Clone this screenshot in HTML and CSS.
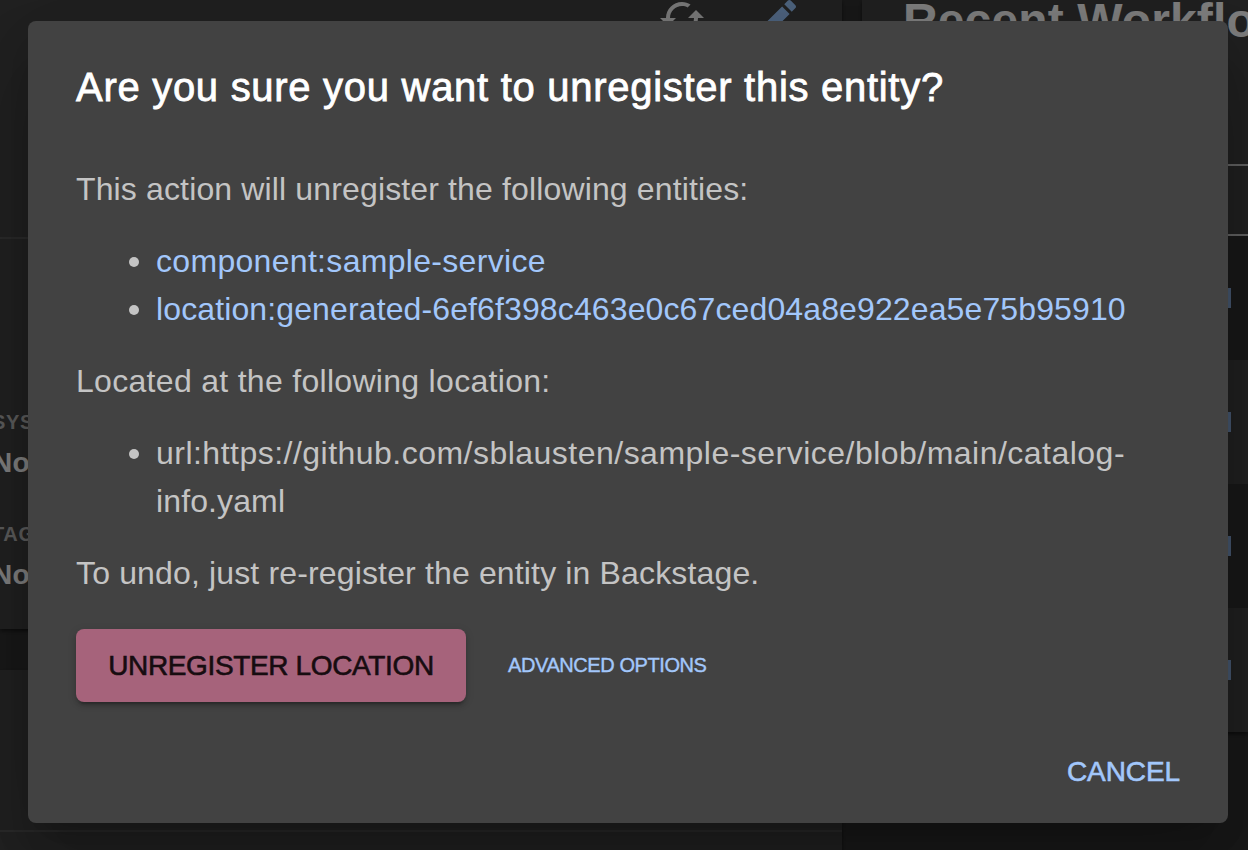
FILE: index.html
```html
<!DOCTYPE html>
<html lang="en">
<head>
<meta charset="utf-8">
<title>Unregister entity</title>
<link rel="stylesheet" href="styles.css">
</head>
<body>
<div class="page">
  <main class="columns">
    <section class="left">
      <div class="card about">
        <div class="toolbar">
          <svg class="icon" viewBox="0 0 24 24"><path d="M19 8l-4 4h3c0 3.31-2.69 6-6 6-1.01 0-1.97-.25-2.8-.7l-1.46 1.46C8.97 19.54 10.43 20 12 20c4.42 0 8-3.58 8-8h3l-4-4zM6 12c0-3.31 2.69-6 6-6 1.01 0 1.97.25 2.8.7l1.46-1.46C15.03 4.46 13.57 4 12 4c-4.42 0-8 3.58-8 8H1l4 4 4-4H6z"/></svg>
          <svg class="icon icon-edit" viewBox="0 0 24 24"><path d="M3 17.25V21h3.75L17.81 9.94l-3.75-3.75L3 17.25zM20.71 7.04c.39-.39.39-1.02 0-1.41l-2.34-2.34c-.39-.39-1.02-.39-1.41 0l-1.83 1.83 3.75 3.75 1.83-1.83z"/></svg>
        </div>
        <div class="fields">
          <div class="field"><div class="label">SYS</div><div class="value">No</div></div>
          <div class="field"><div class="label">TAG</div><div class="value">No</div></div>
        </div>
      </div>
      <div class="card lower"></div>
    </section>
    <section class="right card">
      <h2 class="heading">Recent Workflo</h2>
      <div class="table-head"></div>
      <div class="row odd"><i class="mark"></i></div>
      <div class="row"><i class="mark"></i></div>
      <div class="row odd"><i class="mark"></i></div>
      <div class="row"><i class="mark"></i></div>
    </section>
  </main>
  <div class="backdrop"></div>
  <div class="dialog" role="dialog">
    <h1 class="title">Are you sure you want to unregister this entity?</h1>
    <div class="content">
      <p class="intro">This action will unregister the following entities:</p>
      <ul>
        <li><a class="component">component:sample-service</a></li>
        <li><a class="location">location:generated-6ef6f398c463e0c67ced04a8e922ea5e75b95910</a></li>
      </ul>
      <p class="located">Located at the following location:</p>
      <ul>
        <li><span><span class="url">url:https://github.com/sblausten/sample-service/blob/main/catalog-</span><br><span class="file">info.yaml</span></span></li>
      </ul>
      <p class="undo">To undo, just re-register the entity in Backstage.</p>
      <div class="buttons">
        <button class="unregister">UNREGISTER LOCATION</button>
        <button class="advanced">ADVANCED OPTIONS</button>
      </div>
    </div>
    <div class="actions"><button class="cancel">CANCEL</button></div>
  </div>
</div>
</body>
</html>
```
FILE: styles.css
```css
* { box-sizing: border-box; }
body { margin: 0; background: #333; font-family: "Liberation Sans", Arial, sans-serif; color: #fff; }
h1, h2, p, ul { margin: 0; padding: 0; font-weight: 400; }
button { border: 0; background: none; font: inherit; padding: 0; }
.page { position: relative; width: 1248px; height: 850px; overflow: hidden; }
.columns { display: grid; grid-template-columns: 842px 386px; gap: 20px; height: 850px; }
.card { background: #424242; box-shadow: 0 2px 4px rgba(0,0,0,.5); }
.left { display: grid; grid-template-rows: 629px 180px; gap: 41px; }
.about { display: flex; flex-direction: column; }
.toolbar { height: 239px; padding-left: 658px; border-bottom: 2px solid #555; display: flex; gap: 48px; }
.icon { width: 48px; height: 48px; margin-top: -6px; fill: #f4f4f4; }
.icon-edit { fill: #9cc9ff; }
.fields { margin: 169px 0 0 -8px; display: flex; flex-direction: column; gap: 20px; font-weight: 700; }
.field { height: 92px; }
.label { font-size: 20px; line-height: 28px; letter-spacing: .6px; color: #b8b8b8; }
.value { font-size: 28px; line-height: 40px; margin-top: 7px; letter-spacing: .4px; }
.lower { background: linear-gradient(#555, #555) 0 160px / 100% 2px no-repeat #424242; }
.right { height: 732px; overflow: hidden; }
.heading { height: 164px; padding: 2px 0 0 41px; font-size: 48px; line-height: 37px; letter-spacing: .12px; font-weight: 700; white-space: nowrap; }
.table-head { height: 72px; border-top: 2px solid #c4c4c4; border-bottom: 2px solid #c4c4c4; }
.row { height: 124px; padding: 52px 0 0 366px; }
.odd { background: #333; }
.mark { display: block; width: 3px; height: 20px; background: #8cb0e0; }
.backdrop { position: absolute; inset: 0; background: rgba(0,0,0,.5); }
.dialog { position: absolute; left: 28px; top: 21px; width: 1200px; height: 802px; padding: 34px 48px 0; background: #424242; border-radius: 8px; box-shadow: 0 22px 30px -14px rgba(0,0,0,.2), 0 48px 76px 6px rgba(0,0,0,.14), 0 18px 92px 16px rgba(0,0,0,.12); display: flex; flex-direction: column; white-space: nowrap; }
.title { font-size: 40px; line-height: 64px; letter-spacing: .71px; -webkit-text-stroke: .8px #fff; }
.content { margin-top: 46px; font-size: 32px; line-height: 48px; color: #c4c4c4; display: flex; flex-direction: column; gap: 24px; }
.content ul { padding-left: 80px; list-style: none; }
.content li { display: flex; }
.content li::before { content: ""; flex: none; width: 10px; height: 10px; border-radius: 50%; background: #c4c4c4; margin: 20px 17px 0 -27px; }
.content a { color: #a2c7fb; }
.intro { letter-spacing: .14px; }
.component { letter-spacing: .31px; }
.location { letter-spacing: .12px; }
.located { letter-spacing: .3px; }
.url { letter-spacing: .48px; }
.file { letter-spacing: .12px; }
.undo { letter-spacing: .15px; }
.buttons { display: flex; align-items: center; gap: 42px; margin-top: 8px; height: 73px; }
.unregister { width: 390px; height: 73px; padding-top: 1px; border-radius: 8px; background: #a6637b; color: #170c10; font-size: 28px; line-height: 48px; letter-spacing: -.36px; -webkit-text-stroke: .6px #170c10; box-shadow: 0 6px 2px -4px rgba(0,0,0,.2), 0 4px 4px rgba(0,0,0,.14), 0 2px 10px rgba(0,0,0,.12); }
.advanced { color: #a2c7fb; font-size: 20px; line-height: 32px; letter-spacing: -.42px; padding-bottom: 2px; -webkit-text-stroke: .4px #a2c7fb; }
.actions { display: flex; justify-content: flex-end; margin-top: 46px; }
.cancel { color: #a2c7fb; font-size: 28px; line-height: 48px; letter-spacing: -.1px; -webkit-text-stroke: .6px #a2c7fb; }
```
